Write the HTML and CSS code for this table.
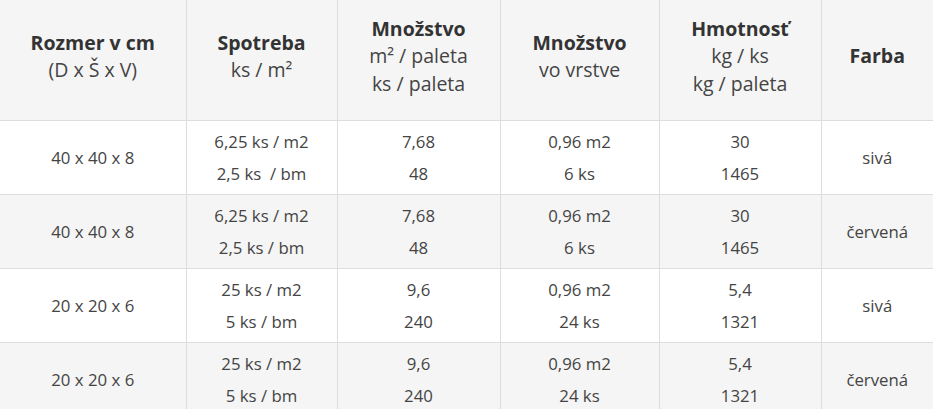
FILE: index.html
```html
<!DOCTYPE html>
<html lang="sk">
<head>
<meta charset="utf-8">
<link rel="stylesheet" href="styles.css">
</head>
<body>
<table class="spec">
  <colgroup>
    <col class="c1">
    <col class="c2">
    <col class="c3">
    <col class="c4">
    <col class="c5">
    <col class="c6">
  </colgroup>
  <thead>
    <tr>
      <th><b>Rozmer v cm</b><br>(D x Š x V)</th>
      <th><b>Spotreba</b><br>ks / m²</th>
      <th><b>Množstvo</b><br>m² / paleta<br>ks / paleta</th>
      <th><b>Množstvo</b><br>vo vrstve</th>
      <th><b>Hmotnosť</b><br>kg / ks<br>kg / paleta</th>
      <th><b>Farba</b></th>
    </tr>
  </thead>
  <tbody>
    <tr>
      <td>40 x 40 x 8</td>
      <td>6,25 ks / m2<br>2,5 ks&nbsp; / bm</td>
      <td>7,68<br>48</td>
      <td>0,96 m2<br>6 ks</td>
      <td>30<br>1465</td>
      <td>sivá</td>
    </tr>
    <tr class="alt">
      <td>40 x 40 x 8</td>
      <td>6,25 ks / m2<br>2,5 ks / bm</td>
      <td>7,68<br>48</td>
      <td>0,96 m2<br>6 ks</td>
      <td>30<br>1465</td>
      <td>červená</td>
    </tr>
    <tr>
      <td>20 x 20 x 6</td>
      <td>25 ks / m2<br>5 ks / bm</td>
      <td>9,6<br>240</td>
      <td>0,96 m2<br>24 ks</td>
      <td>5,4<br>1321</td>
      <td>sivá</td>
    </tr>
    <tr class="alt">
      <td>20 x 20 x 6</td>
      <td>25 ks / m2<br>5 ks / bm</td>
      <td>9,6<br>240</td>
      <td>0,96 m2<br>24 ks</td>
      <td>5,4<br>1321</td>
      <td>červená</td>
    </tr>
  </tbody>
</table>
</body>
</html>
```
FILE: styles.css
```css
html, body {
  margin: 0;
  padding: 0;
  background: #ffffff;
}
body {
  font-family: "Open Sans", "Liberation Sans", sans-serif;
  color: #444444;
}
.spec {
  border-collapse: collapse;
  table-layout: fixed;
  width: 933px;
}
.c1 { width: 186px; }
.c2 { width: 151px; }
.c3 { width: 163px; }
.c4 { width: 159px; }
.c5 { width: 162px; }
.c6 { width: 112px; }
.spec th, .spec td {
  text-align: center;
  vertical-align: middle;
  border-left: 1px solid #dddddd;
  padding: 0 4px;
}
.spec th:first-child, .spec td:first-child {
  border-left: none;
}
.spec thead th {
  background: #f5f5f5;
  font-size: 19.5px;
  line-height: 27.5px;
  font-weight: normal;
  color: #444444;
  height: 120px;
  box-sizing: border-box;
  padding-top: 14.75px;
  padding-bottom: 22.75px;
}
.spec thead b {
  font-weight: 700;
  color: #333333;
}
.spec tbody td {
  border-top: 1px solid #dddddd;
  font-size: 16.8px;
  line-height: 32px;
  padding-top: 4.5px;
  padding-bottom: 4.5px;
}
.spec tbody tr.alt td {
  background: #f5f5f5;
}
```
